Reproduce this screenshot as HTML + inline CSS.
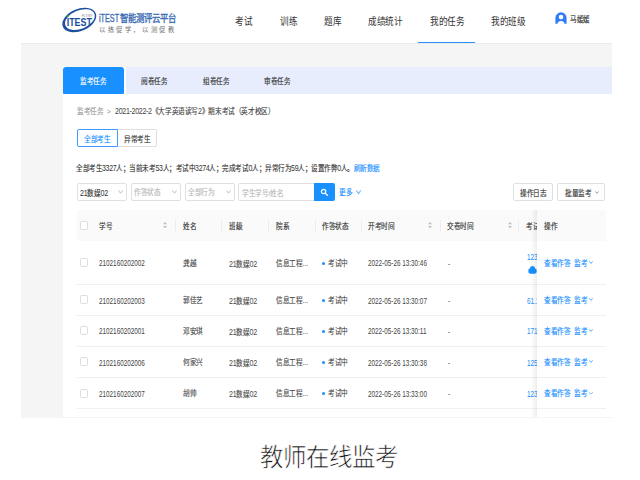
<!DOCTYPE html>
<html lang="zh-CN">
<head>
<meta charset="utf-8">
<style>
*{margin:0;padding:0;box-sizing:border-box}
html,body{width:640px;height:480px;overflow:hidden;background:#fff}
body{position:relative;font-family:"Liberation Sans",sans-serif;color:#333}
.a{position:absolute;white-space:nowrap;line-height:1}
.nav{font-size:10px;color:#333;top:17px;transform:scaleX(.86);transform-origin:0 0}
.t7{font-size:8px;transform:scaleX(.83);transform-origin:0 0;-webkit-text-stroke:.15px currentColor}
.gray{left:21px;top:43px;width:591px;height:375px;background:#f5f5f5;border-top:1px solid #ebebeb}
.card{left:63px;top:67px;width:549px;height:350px;background:#fff}
.tabbar{left:125.5px;top:67px;width:486.5px;height:27.2px;background:#e7edfd}
.tabon{left:63px;top:67px;width:61.3px;height:27.2px;background:#1890ff;border-radius:3px 3px 1px 1px}
.box{border:1px solid #e0e0e0;border-radius:2px;background:#fff}
.ph{color:#b8b8b8}
.chev{width:3.5px;height:3.5px;border-right:1px solid #aaa;border-bottom:1px solid #aaa;transform:rotate(45deg)}
.th{background:#fafafa}
.sep{width:1px;height:11px;background:#ececec;top:220px}
.rowline{left:77px;width:529px;height:1px;background:#f0f0f0}
.cb{width:7.8px;height:9.2px;border:1px solid #dedede;border-radius:1.8px;background:#fff}
.blue{color:#1890ff}
.dg{font-size:9px;transform:scaleX(.705);transform-origin:0 0;color:#444}
.d{font-size:8.6px;letter-spacing:-.4px;-webkit-text-stroke:0}
.dg.blue{color:#1890ff}
</style>
</head>
<body>
<svg class="a" style="left:60px;top:5px" width="40" height="30" viewBox="0 0 40 30">
  <ellipse cx="19.3" cy="15" rx="17.7" ry="11.1" transform="rotate(-22 19.3 15)" fill="#1d4f9e"/>
  <ellipse cx="19.9" cy="14.6" rx="15.6" ry="9.3" transform="rotate(-22 19.9 14.6)" fill="#fff"/>
  <circle cx="7.7" cy="11" r="1.1" fill="#2fae3c"/>
  <text x="6.7" y="21.3" font-family="Liberation Sans" font-weight="bold" font-size="11.1" fill="#1d4f9e" textLength="25.3" lengthAdjust="spacingAndGlyphs">ITEST</text>
  <text x="21.7" y="11.7" font-family="Liberation Sans" font-size="3.7" fill="#8c8c8c" textLength="11" lengthAdjust="spacingAndGlyphs">FLTRP</text>
</svg>
<div class="a" style="left:99px;top:13px;font-size:10.5px;color:#3a6ab3;-webkit-text-stroke:.35px currentColor;transform:scaleX(.8);transform-origin:0 0"><span style="display:inline-block;transform:scaleX(.86);transform-origin:0 0;width:26px">iTEST</span>智能测评云平台</div>
<div class="a" style="left:99px;top:26.5px;font-size:6.3px;color:#707070;letter-spacing:2.6px">以练促学，以测促教</div>
<div class="a nav" style="left:234.7px">考试</div>
<div class="a nav" style="left:279.7px">训练</div>
<div class="a nav" style="left:323.7px">题库</div>
<div class="a nav" style="left:368px">成绩统计</div>
<div class="a nav" style="left:430px">我的任务</div>
<div class="a nav" style="left:491px">我的班级</div>
<svg class="a" style="left:555px;top:12.3px" width="12" height="12" viewBox="0 0 12 12">
  <path fill-rule="evenodd" fill="#2f7cf6" d="M0.4 5.9 A5.6 5.6 0 0 1 11.6 5.9 L11.6 11.7 L9.5 11.7 Q9 9 6 9 Q3 9 2.5 11.7 L0.4 11.7 Z M6 2.8 A2.3 2.3 0 1 0 6 7.4 A2.3 2.3 0 1 0 6 2.8 Z"/>
</svg>
<div class="a t7" style="left:570px;top:15.8px;">马媛媛</div>
<div class="a gray"></div>
<div class="a" style="left:418px;top:41.5px;width:57px;height:1.8px;background:#2990ff"></div>
<div class="a card"></div><div class="a tabbar"></div><div class="a tabon"></div>
<div class="a t7" style="left:80px;top:78.3px;color:#fff">监考任务</div>
<div class="a t7" style="left:141px;top:78.3px;">阅卷任务</div>
<div class="a t7" style="left:203px;top:78.3px;">组卷任务</div>
<div class="a t7" style="left:264px;top:78.3px;">审卷任务</div>
<div class="a t7" style="left:76.5px;top:107.8px;color:#999">监考任务</div>
<div class="a t7" style="left:106.5px;top:107.8px;color:#aaa">&gt;</div>
<div class="a t7" style="left:114.5px;top:107.4px;transform:scaleX(.828);color:#444"><span class="d">2021-2022-2</span>《大学英语读写<span class="d">2</span>》期末考试（英才校区）</div>
<div class="a" style="left:76.5px;top:129px;width:41.2px;height:18px;border:1px solid #3d9bff;border-radius:2px 0 0 2px;background:#fff"></div>
<div class="a" style="left:117.7px;top:129px;width:39.8px;height:18px;border:1px solid #dedede;border-left:none;border-radius:0 2px 2px 0"></div>
<div class="a t7 blue" style="left:84px;top:135.8px;">全部考生</div>
<div class="a t7" style="left:124px;top:135.8px;">异常考生</div>
<div class="a t7" style="left:76px;top:164.0px;transform:scaleX(.814)">全部考生<span class="d">3327</span>人；当前未考<span class="d">53</span>人；考试中<span class="d">3274</span>人；完成考试<span class="d">0</span>人；异常行为<span class="d">59</span>人；设置作弊<span class="d">0</span>人。<span class="blue">刷新数据</span></div>
<div class="a box" style="left:76.5px;top:182.5px;width:50px;height:18px"></div>
<div class="a t7" style="left:80.0px;top:189.0px;"><span class="d">21</span>数媒<span class="d">02</span></div>
<svg class="a" style="left:118.0px;top:190.4px" width="5" height="3.6" viewBox="0 0 5 3.6"><polyline points="0.4,0.4 2.5,3.2 4.6,0.4" fill="none" stroke="#b0b0b0" stroke-width="0.8"/></svg>
<div class="a box" style="left:130.5px;top:182.5px;width:50px;height:18px"></div>
<div class="a t7 ph" style="left:134.0px;top:189.0px;">作答状态</div>
<svg class="a" style="left:172.0px;top:190.4px" width="5" height="3.6" viewBox="0 0 5 3.6"><polyline points="0.4,0.4 2.5,3.2 4.6,0.4" fill="none" stroke="#b0b0b0" stroke-width="0.8"/></svg>
<div class="a box" style="left:184.5px;top:182.5px;width:50px;height:18px"></div>
<div class="a t7 ph" style="left:188.0px;top:189.0px;">全部行为</div>
<svg class="a" style="left:226.0px;top:190.4px" width="5" height="3.6" viewBox="0 0 5 3.6"><polyline points="0.4,0.4 2.5,3.2 4.6,0.4" fill="none" stroke="#b0b0b0" stroke-width="0.8"/></svg>
<div class="a box" style="left:238px;top:182.5px;width:77px;height:18.2px;border-radius:2px 0 0 2px"></div>
<div class="a t7 ph" style="left:242px;top:189.8px;">学生学号/姓名</div>
<div class="a" style="left:313.8px;top:182.5px;width:21.4px;height:18.2px;background:#1890ff;border-radius:0 2px 2px 0"></div>
<svg class="a" style="left:319.6px;top:188px" width="9" height="9" viewBox="0 0 9 9"><circle cx="3.6" cy="3.5" r="2.2" fill="none" stroke="#fff" stroke-width="1.2"/><path d="M5.2 5.1 L7.4 7.2" stroke="#fff" stroke-width="1.3" stroke-linecap="round"/></svg>
<div class="a t7 blue" style="left:338.8px;top:188.8px;">更多</div>
<svg class="a" style="left:355.5px;top:189.8px" width="5" height="4.2" viewBox="0 0 5 4.2"><polyline points="0.4,0.4 2.5,3.8000000000000003 4.6,0.4" fill="none" stroke="#1890ff" stroke-width="0.8"/></svg>
<div class="a box" style="left:512.5px;top:182.5px;width:40px;height:18px"></div>
<div class="a t7" style="left:519.5px;top:189.8px;">操作日志</div>
<div class="a box" style="left:557px;top:182.5px;width:47.5px;height:18px"></div>
<div class="a t7" style="left:564.5px;top:189.8px;">批量监考</div>
<svg class="a" style="left:594.5px;top:190.8px" width="4" height="2.8" viewBox="0 0 4 2.8"><polyline points="0.4,0.4 2.0,2.4 3.6,0.4" fill="none" stroke="#888" stroke-width="0.8"/></svg>
<div class="a th" style="left:77px;top:210px;width:529px;height:31px"></div>
<div class="a cb" style="left:80.2px;top:221px"></div>
<div class="a t7" style="left:99px;top:223.3px;">学号</div>
<div class="a t7" style="left:182.5px;top:223.3px;">姓名</div>
<div class="a t7" style="left:228.5px;top:223.3px;">班级</div>
<div class="a t7" style="left:275.5px;top:223.3px;">院系</div>
<div class="a t7" style="left:322px;top:223.3px;">作答状态</div>
<div class="a t7" style="left:368px;top:223.3px;">开考时间</div>
<div class="a t7" style="left:447px;top:223.3px;">交卷时间</div>
<div class="a t7" style="left:526px;top:223.3px;">考试</div>
<div class="a sep" style="left:174.8px"></div>
<div class="a sep" style="left:221.3px"></div>
<div class="a sep" style="left:267.6px"></div>
<div class="a sep" style="left:314.6px"></div>
<div class="a sep" style="left:360.6px"></div>
<div class="a sep" style="left:439.6px"></div>
<div class="a sep" style="left:518.3px"></div>
<svg class="a" style="left:163.2px;top:221.8px" width="4" height="7" viewBox="0 0 4 7"><path d="M0 2.3 L2 0 L4 2.3 Z" fill="#bdbdbd"/><path d="M0 4 L2 6.3 L4 4 Z" fill="#bdbdbd"/></svg>
<svg class="a" style="left:428.2px;top:221.8px" width="4" height="7" viewBox="0 0 4 7"><path d="M0 2.3 L2 0 L4 2.3 Z" fill="#bdbdbd"/><path d="M0 4 L2 6.3 L4 4 Z" fill="#bdbdbd"/></svg>
<svg class="a" style="left:507.7px;top:221.8px" width="4" height="7" viewBox="0 0 4 7"><path d="M0 2.3 L2 0 L4 2.3 Z" fill="#bdbdbd"/><path d="M0 4 L2 6.3 L4 4 Z" fill="#bdbdbd"/></svg>
<div class="a rowline" style="top:283.9px"></div>
<div class="a cb" style="left:80.2px;top:258.0px"></div>
<div class="a dg" style="left:99px;top:259.3px;">2102160202002</div>
<div class="a t7" style="left:182.5px;top:259.8px;color:#4a4a4a">龚越</div>
<div class="a t7" style="left:228.5px;top:259.8px;color:#4a4a4a"><span class="d">21</span>数媒<span class="d">02</span></div>
<div class="a t7" style="left:275.5px;top:259.8px;color:#4a4a4a">信息工程...</div>
<div class="a" style="left:321.8px;top:261.7px;width:3px;height:3px;border-radius:50%;background:#1890ff"></div>
<div class="a t7" style="left:328px;top:259.8px;color:#4a4a4a">考试中</div>
<div class="a dg" style="left:368px;top:259.3px;">2022-05-26 13:30:46</div>
<div class="a t7" style="left:447.5px;top:259.8px;">-</div>
<div class="a dg blue" style="left:526.8px;top:253.3px;">123</div>
<svg class="a" style="left:527.5px;top:265px" width="9" height="9" viewBox="0 0 9 9"><path d="M2 3.6 A2.5 2.5 0 0 1 7 3.6 L8 3.8 Q8.6 4 8.6 5 L8.6 7 Q8.6 8.8 6.5 8.8 L2.5 8.8 Q0.4 8.8 0.4 7 L0.4 5 Q0.4 4 1 3.8 Z" fill="#1890ff"/></svg>
<div class="a rowline" style="top:314.7px"></div>
<div class="a cb" style="left:80.2px;top:295.2px"></div>
<div class="a dg" style="left:99px;top:296.5px;">2102160202003</div>
<div class="a t7" style="left:182.5px;top:297.0px;color:#4a4a4a">郭佳艺</div>
<div class="a t7" style="left:228.5px;top:297.0px;color:#4a4a4a"><span class="d">21</span>数媒<span class="d">02</span></div>
<div class="a t7" style="left:275.5px;top:297.0px;color:#4a4a4a">信息工程...</div>
<div class="a" style="left:321.8px;top:298.9px;width:3px;height:3px;border-radius:50%;background:#1890ff"></div>
<div class="a t7" style="left:328px;top:297.0px;color:#4a4a4a">考试中</div>
<div class="a dg" style="left:368px;top:296.5px;">2022-05-26 13:30:07</div>
<div class="a t7" style="left:447.5px;top:297.0px;">-</div>
<div class="a dg blue" style="left:526.8px;top:296.5px;">61.1</div>
<div class="a rowline" style="top:345.7px"></div>
<div class="a cb" style="left:80.2px;top:326.1px"></div>
<div class="a dg" style="left:99px;top:327.4px;">2102160202001</div>
<div class="a t7" style="left:182.5px;top:327.9px;color:#4a4a4a">邓安琪</div>
<div class="a t7" style="left:228.5px;top:327.9px;color:#4a4a4a"><span class="d">21</span>数媒<span class="d">02</span></div>
<div class="a t7" style="left:275.5px;top:327.9px;color:#4a4a4a">信息工程...</div>
<div class="a" style="left:321.8px;top:329.8px;width:3px;height:3px;border-radius:50%;background:#1890ff"></div>
<div class="a t7" style="left:328px;top:327.9px;color:#4a4a4a">考试中</div>
<div class="a dg" style="left:368px;top:327.4px;">2022-05-26 13:30:11</div>
<div class="a t7" style="left:447.5px;top:327.9px;">-</div>
<div class="a dg blue" style="left:526.8px;top:327.4px;">171</div>
<div class="a rowline" style="top:377.2px"></div>
<div class="a cb" style="left:80.2px;top:357.3px"></div>
<div class="a dg" style="left:99px;top:358.6px;">2102160202006</div>
<div class="a t7" style="left:182.5px;top:359.1px;color:#4a4a4a">何家兴</div>
<div class="a t7" style="left:228.5px;top:359.1px;color:#4a4a4a"><span class="d">21</span>数媒<span class="d">02</span></div>
<div class="a t7" style="left:275.5px;top:359.1px;color:#4a4a4a">信息工程...</div>
<div class="a" style="left:321.8px;top:361.1px;width:3px;height:3px;border-radius:50%;background:#1890ff"></div>
<div class="a t7" style="left:328px;top:359.1px;color:#4a4a4a">考试中</div>
<div class="a dg" style="left:368px;top:358.6px;">2022-05-26 13:30:38</div>
<div class="a t7" style="left:447.5px;top:359.1px;">-</div>
<div class="a dg blue" style="left:526.8px;top:358.6px;">125</div>
<div class="a rowline" style="top:408.1px"></div>
<div class="a cb" style="left:80.2px;top:388.5px"></div>
<div class="a dg" style="left:99px;top:389.8px;">2102160202007</div>
<div class="a t7" style="left:182.5px;top:390.3px;color:#4a4a4a">胡帅</div>
<div class="a t7" style="left:228.5px;top:390.3px;color:#4a4a4a"><span class="d">21</span>数媒<span class="d">02</span></div>
<div class="a t7" style="left:275.5px;top:390.3px;color:#4a4a4a">信息工程...</div>
<div class="a" style="left:321.8px;top:392.2px;width:3px;height:3px;border-radius:50%;background:#1890ff"></div>
<div class="a t7" style="left:328px;top:390.3px;color:#4a4a4a">考试中</div>
<div class="a dg" style="left:368px;top:389.8px;">2022-05-26 13:33:00</div>
<div class="a t7" style="left:447.5px;top:390.3px;">-</div>
<div class="a dg blue" style="left:526.8px;top:389.8px;">123</div>
<div class="a" style="left:531px;top:210px;width:6px;height:207px;background:linear-gradient(to right,rgba(0,0,0,0),rgba(0,0,0,.07))"></div>
<div class="a" style="left:537px;top:210px;width:69px;height:31px;background:#fafafa"></div>
<div class="a" style="left:537px;top:241px;width:69px;height:176px;background:#fff"></div>
<div class="a t7" style="left:544px;top:223.3px;">操作</div>
<div class="a" style="left:537px;top:283.9px;width:69px;height:1px;background:#f0f0f0"></div>
<div class="a t7 blue" style="left:544px;top:259.8px;">查看作答</div>
<div class="a t7 blue" style="left:574px;top:259.8px;">监考</div>
<svg class="a" style="left:589px;top:261.0px" width="4" height="2.8" viewBox="0 0 4 2.8"><polyline points="0.35,0.35 2.0,2.4499999999999997 3.65,0.35" fill="none" stroke="#1890ff" stroke-width="0.7"/></svg>
<div class="a" style="left:537px;top:314.7px;width:69px;height:1px;background:#f0f0f0"></div>
<div class="a t7 blue" style="left:544px;top:297.0px;">查看作答</div>
<div class="a t7 blue" style="left:574px;top:297.0px;">监考</div>
<svg class="a" style="left:589px;top:298.2px" width="4" height="2.8" viewBox="0 0 4 2.8"><polyline points="0.35,0.35 2.0,2.4499999999999997 3.65,0.35" fill="none" stroke="#1890ff" stroke-width="0.7"/></svg>
<div class="a" style="left:537px;top:345.7px;width:69px;height:1px;background:#f0f0f0"></div>
<div class="a t7 blue" style="left:544px;top:327.9px;">查看作答</div>
<div class="a t7 blue" style="left:574px;top:327.9px;">监考</div>
<svg class="a" style="left:589px;top:329.1px" width="4" height="2.8" viewBox="0 0 4 2.8"><polyline points="0.35,0.35 2.0,2.4499999999999997 3.65,0.35" fill="none" stroke="#1890ff" stroke-width="0.7"/></svg>
<div class="a" style="left:537px;top:377.2px;width:69px;height:1px;background:#f0f0f0"></div>
<div class="a t7 blue" style="left:544px;top:359.1px;">查看作答</div>
<div class="a t7 blue" style="left:574px;top:359.1px;">监考</div>
<svg class="a" style="left:589px;top:360.3px" width="4" height="2.8" viewBox="0 0 4 2.8"><polyline points="0.35,0.35 2.0,2.4499999999999997 3.65,0.35" fill="none" stroke="#1890ff" stroke-width="0.7"/></svg>
<div class="a" style="left:537px;top:408.1px;width:69px;height:1px;background:#f0f0f0"></div>
<div class="a t7 blue" style="left:544px;top:390.3px;">查看作答</div>
<div class="a t7 blue" style="left:574px;top:390.3px;">监考</div>
<svg class="a" style="left:589px;top:391.5px" width="4" height="2.8" viewBox="0 0 4 2.8"><polyline points="0.35,0.35 2.0,2.4499999999999997 3.65,0.35" fill="none" stroke="#1890ff" stroke-width="0.7"/></svg>
<div class="a" style="left:0;top:418px;width:640px;height:62px;background:#fff"></div>
<div class="a" style="left:260px;top:446px;font-size:23.5px;color:#111;transform:scaleY(1.07);transform-origin:0 0;font-family:'Liberation Serif',serif;-webkit-text-stroke:.6px #fff">教师在线监考</div>
</body>
</html>
